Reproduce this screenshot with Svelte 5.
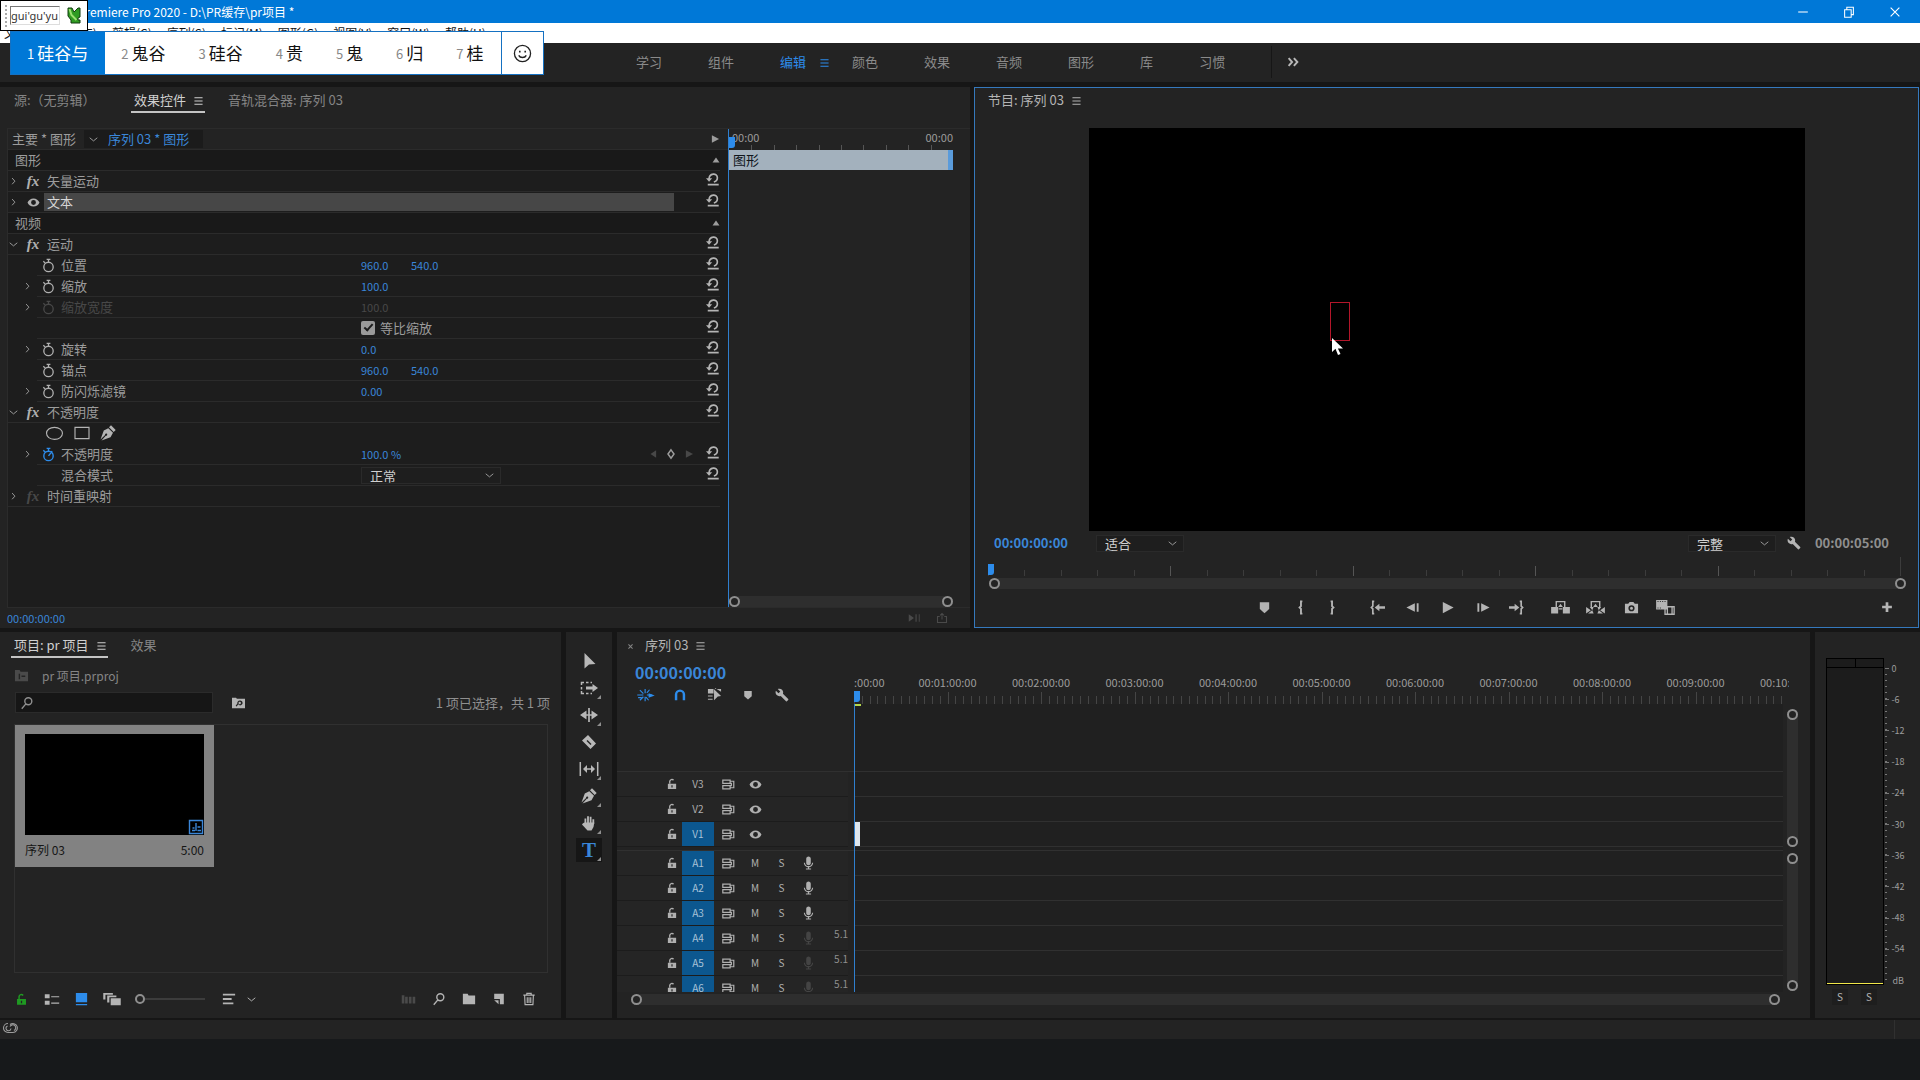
<script lang="ts">
  interface Icon {
    box?: string;
    fill?: string;
    line?: string;
    weight?: number;
  }

  interface Row {
    level: number;
    label: string;
    mark?: 'fx' | 'eye' | 'watch' | 'none';
    open?: boolean;
    arrow?: boolean;
    off?: boolean;
    on?: boolean;
    values?: string[];
    kind?: 'section' | 'uniform' | 'masks' | 'blend' | 'selected' | 'keyed';
  }

  const icons: Record<string, Icon> = {
    menu: { line: 'M3 4.5h10M3 8.5h10M3 12.5h10', weight: 1.3 },
    right: { line: 'M6 3l4 4.5L6 12', weight: 1.4 },
    down: { line: 'M2.500 5.500l5.500 4.500 5.500-4.500', weight: 1.4 },
    more: { line: 'M3 3.5l4 4.5-4 4.5M9 3.5l4 4.5-4 4.5', weight: 2.2 },
    close: { line: 'M5 5l6 6M11 5l-6 6', weight: 1.5 },
    up: { fill: 'M1 13l7-10 7 10z' },
    play: { fill: 'M3 2l11.5 6L3 14z' },
    left: { fill: 'M13 2v12L4 8z' },
    eye: { box: '0 0 24 24', fill: 'M12 4.5C7 4.5 2.7 7.6 1 12c1.7 4.4 6 7.5 11 7.5s9.300-3.100 11-7.500C21.300 7.600 17 4.500 12 4.500zM12 16.500a4.500 4.500 0 110-9 4.500 4.500 0 010 9z' },
    watch: { line: 'M8 4.500a5 5 0 100 10 5 5 0 000-10zM6 1.500h4M8 1.500v3M2.500 3.500l2 2', weight: 1.4 },
    watchOn: { line: 'M8 4.500a5 5 0 100 10 5 5 0 000-10zM6 1.500h4M8 1.500v3M2.500 3.500l2 2M8 9.500l4-5', weight: 1.5 },
    reset: { fill: 'M0 7h7l-3.500 4z', line: 'M3.500 8C3.500 1 13 0.500 13 6.500c0 3-1.500 4.200-4 5M2 14.500h12.500', weight: 1.9 },
    ellipse: { box: '0 0 20 16', line: 'M10 1.500c5 0 8.500 2.700 8.500 6.300S15 14.200 10 14.200 1.500 11.500 1.500 7.800 5 1.500 10 1.500z', weight: 1.2 },
    rect: { box: '0 0 20 16', line: 'M2 1.500h16v13H2z', weight: 1.3 },
    pen: { fill: 'M11 0.300l4.700 4.700-2 2L9 2.300zM8.300 3.200l4.700 4.600-2.500 4.500L1.500 15.500l4.300-4.800a1.100 1.100 0 10-.7-.7L.5 14.500 3.800 5.500z' },
    diamond: { line: 'M8 2.500l4 5.500-4 5.500L4 8z', weight: 2 },
    marker: { fill: 'M3 2.500h10v7l-5 4.500-5-4.500z' },
    markIn: { line: 'M10 1.500H8.500v5L7 8l1.500 1.500v5H10', weight: 2 },
    markOut: { line: 'M6 1.500h1.500v5L9 8 7.500 9.500v5H6', weight: 2 },
    goIn: { line: 'M4.500 1.500H3v5L1.500 8 3 9.500v5h1.500', fill: 'M5 8l5-4v2.700h6v2.600h-6V12z', weight: 1.8 },
    goOut: { line: 'M11.500 1.500H13v5L14.500 8 13 9.500v5h-1.500', fill: 'M11 8L6 4v2.700H0v2.600h6V12z', weight: 1.8 },
    stepBack: { fill: 'M10.500 3.500v9L1.500 8zM12.500 3.500h2v9h-2z' },
    stepOn: { fill: 'M1.500 3.500h2v9h-2zM5.500 3.500v9l9-4.500z' },
    lift: { box: '0 0 20 16', fill: 'M0 7.500h7.500v7H0zM12.500 7.500H20v7h-7.500zM10 4l2.500 3.500h-5z', line: 'M5.500 8V1.700h9V8M8 9.500h4', weight: 1.5 },
    extract: { box: '0 0 20 16', fill: 'M0 7.500l5 3.500-5 3.500zM20 7.500L15 11l5 3.500zM4 7.500h4L6.500 11 8 14.500H2L6.500 11zM16 7.500h-4l1.500 3.500-1.500 3.500h6L13.500 11zM10 4l2.500 3.500h-5z', line: 'M5.500 8V1.700h9V8', weight: 1.5 },
    camera: { fill: 'M1 4h3.500L6 2h4l1.500 2H15v10H1zM8 5.500a3.300 3.300 0 100 6.600 3.300 3.300 0 000-6.600zM8 7.200a1.600 1.600 0 110 3.200 1.600 1.600 0 010-3.200z' },
    compare: { box: '0 0 20 16', fill: 'M0 0h12v10H0zM1.500 1v1h1V1zM4 1v1h1V1zM6.500 1v1h1V1zM9 1v1h1V1zM1.500 8v1h1V8zM4 8v1h1V8z', line: 'M9.500 7.200h9.700v8H9.500zM12 7.200v8M17 7.200v8', weight: 1.4 },
    plus: { line: 'M8 1.500v13M1.500 8h13', weight: 3.6 },
    wrench: { box: '0 0 24 24', fill: 'M22.700 19l-9.100-9.100c.9-2.300.4-5-1.500-6.900-2-2-5-2.400-7.400-1.300L9 6 6 9 1.600 4.700C.4 7.100.9 10.100 2.900 12.100c1.900 1.900 4.600 2.400 6.900 1.500l9.100 9.100c.4.4 1 .4 1.400 0l2.300-2.300c.5-.4.5-1.100.1-1.400z' },
    search: { line: 'M9.500 2a4 4 0 100 8 4 4 0 000-8zM6.700 9L2 14.500', weight: 1.6 },
    bin: { fill: 'M1 2h5l1 2h8v10H1zM5 6v6h1.500V6zM8 8h4v1.500H8z' },
    findBin: { fill: 'M0 2h5l1 1.500h10V15H0zM9.500 5.500a3 3 0 00-2.900 3.700L4.500 12l1.200.9 2-2.600a3 3 0 101.800-4.800zM9.500 7a1.500 1.500 0 110 3 1.500 1.500 0 010-3z' },
    folder: { fill: 'M1 2h5.500l1 2H15v10H1z' },
    lock: { fill: 'M2.500 7.500h11v7h-11zM7.200 9.500v3h1.600v-3z', line: 'M5 7.500V4.500a2.800 2.800 0 015-1.500', weight: 1.8 },
    list: { box: '0 0 20 16', fill: 'M1 1.500h6v5H1zM1 9.500h6v5H1z', line: 'M9 4.500h10M9 12.500h10', weight: 1.4 },
    grid: { fill: 'M2 1h12v10H2zM2 12.700h12V14H2z' },
    free: { box: '0 0 20 16', fill: 'M8.500 7H20v8H8.500zM4.500 4H15v2H7v6H4.500zM0 1h11v2H2.500v5.500H0z' },
    sort: { line: 'M1 3h14M1 8h10M1 13h12', weight: 2.2 },
    auto: { box: '0 0 20 16', fill: 'M1 3h3.500v11H1zM5.500 5H9v9H5.500zM10.500 5H14v9h-3.500zM15.500 5H19v9h-3.500z' },
    newItem: { fill: 'M2.500 2h11v12H9V8H2.500zM2.500 9.500h5V14z' },
    trash: { line: 'M1.500 3.500h13M5.500 3V1.500h5V3M3 4l.5 10.500h9L13 4M6 6v6.500M8 6v6.500M10 6v6.500', weight: 1.3 },
    select: { fill: 'M3.500 0v15.500L8 11.500l6.500-.5z' },
    track: { box: '0 0 18 16', fill: 'M6 6.500h6.500V4L18 8l-5.500 4V9.500H6z', line: 'M1.500 5V2.500H4M6 2.500h2.500M10.500 2.500H12M1.500 7v2.500M1.500 11v2.500H4M6 13.500h2.500M10.500 13.500H12', weight: 1.5 },
    ripple: { box: '0 0 18 16', fill: 'M6.500 3.500v9L0 8zM11.500 3.500v9L18 8z', line: 'M9 1v14M6 8h6', weight: 1.7 },
    razor: { fill: 'M7 1l8 8.500L9.500 15 1 6.500zM5.500 7l4 4 1-1-4-4z' },
    slip: { box: '0 0 20 16', fill: 'M8 4v8L4 8zM12 4v8l4-4z', line: 'M1.300 1v14M18.700 1v14M6 8h8', weight: 1.5 },
    hand: { fill: 'M3.500 7.500h9.800l-.8 4.500-2 3.500H6.500L1 9.500l1-1.300z', line: 'M4.400 9V3.500M7 8V1.300M9.600 8V1.800M12.300 9V4.200', weight: 1.8 },
    nest: { box: '0 0 20 16', fill: 'M13 6l7 2.500-7 2.500z', line: 'M0 8h7M9 1v5M9 10v5M3 2.500l4 4M14 2l-3 3.500M3 14l4-4M13 14l-3-3.500M1 11h4M11 8h6', weight: 1.3 },
    magnet: { line: 'M3.500 14V7.500a4.500 4.500 0 019 0V14', weight: 2.800 },
    linked: { fill: 'M1 2h6v5H1zM8.500 2H15v3L8.500 1zM1 9h5v1H1zM1 12.500h5v1H1zM7.500 2.500l7.500 7-3.500.5-4 4z' },
    sync: { line: 'M1 2.500h9v4H1zM1 9.500h9v4H1zM10 4h4.500v8H10M10 6.500h1.500v3H10', weight: 1.5 },
    mic: { box: '2 1 20 21', fill: 'M12 15c2.200 0 3.500-1.500 3.500-3.500V5C15.500 3 14 1.500 12 1.500S8.500 3 8.500 5v6.500C8.500 13.500 9.800 15 12 15zM17.500 11c0 3-2.500 5.300-5.500 5.300S6.500 14 6.500 11H4.800c0 3.500 2.800 6.300 6.200 6.900V20H8v1.500h8V20h-3v-2.100c3.400-.6 6.200-3.400 6.200-6.900z' },
    seq: { line: 'M1.500 1.500h13v13h-13zM8 4v8M4 11.500h3M9.500 11.500H13M4.500 9h2M9.500 8h3', weight: 1.4 },
    cloud: { line: 'M6 3.500a4.500 4.500 0 100 9h5a4.500 4.500 0 10-3-8M5.500 6a2.500 2.500 0 103.500 2.500M8 6.500a3 3 0 114 4', weight: 1.1 },
    skip: { fill: 'M1 3l7 5-7 5zM10 3h1.500v10H10z', line: 'M15 3v10', weight: 1.2 },
    exportBox: { line: 'M5 6H2v8h12V6h-3M8 10V2M5.500 4.500L8 2l2.500 2.500', weight: 1.4 },
    minimize: { line: 'M2.500 8h11', weight: 1.2 },
    restore: { line: 'M3 5.500h7.500V14H3zM5.500 5.500V2.500H13V11h-2.500', weight: 1.2 },
    exit: { line: 'M3 3l10 10M13 3L3 13', weight: 1.3 },
    smile: { box: '0 0 20 20', fill: 'M6.300 7h1.700v2H6.300zM12 7h1.700v2H12z', line: 'M10 1.500a8.500 8.500 0 100 17 8.500 8.500 0 000-17zM6 12c1.500 3 6.500 3 8 0', weight: 1.4 },
  };

  const candidates = ['硅谷与', '鬼谷', '硅谷', '贵', '鬼', '归', '桂'];
  const menus = ['文件(F)', '编辑(E)', '剪辑(C)', '序列(S)', '标记(M)', '图形(G)', '视图(V)', '窗口(W)', '帮助(H)'];
  const workspaces = ['学习', '组件', '编辑', '颜色', '效果', '音频', '图形', '库', '习惯'];

  const rows: Row[] = [
    { level: 0, label: '图形', kind: 'section' },
    { level: 1, label: '矢量运动', mark: 'fx', arrow: true },
    { level: 1, label: '文本', mark: 'eye', arrow: true, kind: 'selected' },
    { level: 0, label: '视频', kind: 'section' },
    { level: 1, label: '运动', mark: 'fx', arrow: true, open: true },
    { level: 2, label: '位置', mark: 'watch', values: ['960.0', '540.0'] },
    { level: 2, label: '缩放', mark: 'watch', arrow: true, values: ['100.0'] },
    { level: 2, label: '缩放宽度', mark: 'watch', arrow: true, off: true, values: ['100.0'] },
    { level: 2, label: '', mark: 'none', kind: 'uniform' },
    { level: 2, label: '旋转', mark: 'watch', arrow: true, values: ['0.0'] },
    { level: 2, label: '锚点', mark: 'watch', values: ['960.0', '540.0'] },
    { level: 2, label: '防闪烁滤镜', mark: 'watch', arrow: true, values: ['0.00'] },
    { level: 1, label: '不透明度', mark: 'fx', arrow: true, open: true },
    { level: 2, label: '', mark: 'none', kind: 'masks' },
    { level: 2, label: '不透明度', mark: 'watch', arrow: true, on: true, values: ['100.0 %'], kind: 'keyed' },
    { level: 2, label: '混合模式', mark: 'none', kind: 'blend' },
    { level: 1, label: '时间重映射', mark: 'fx', arrow: true, off: true },
  ];

  const transport = [
    { name: 'marker', title: '添加标记', gap: 21 },
    { name: 'markIn', title: '标记入点', gap: 17 },
    { name: 'markOut', title: '标记出点', gap: 30 },
    { name: 'goIn', title: '转到入点', gap: 20 },
    { name: 'stepBack', title: '后退一帧', gap: 20 },
    { name: 'play', title: '播放', gap: 21 },
    { name: 'stepOn', title: '前进一帧', gap: 18 },
    { name: 'goOut', title: '转到出点', gap: 27 },
    { name: 'lift', title: '提升', gap: 16 },
    { name: 'extract', title: '提取', gap: 19 },
    { name: 'camera', title: '导出帧', gap: 17 },
    { name: 'compare', title: '比较视图', gap: 0 },
  ];

  const tools = ['select', 'track', 'ripple', 'razor', 'slip', 'pen', 'hand', 'type'];
  const minutes = [':00:00', ...Array.from({ length: 9 }, (_, i) => `00:0${i + 1}:00:00`), '00:10:00:00'];
  const videoTracks = ['V3', 'V2', 'V1'];
  const audioTracks = ['A1', 'A2', 'A3', 'A4', 'A5', 'A6'];
  const levels = ['0', '-6', '-12', '-18', '-24', '-30', '-36', '-42', '-48', '-54'];

  let workspace = $state('编辑');
  let tool = $state('type');
  let uniform = $state(true);
  let query = $state('');
  let thumbSize = $state(0);
</script>

{#snippet icon(name: string, size = 16)}
  {@const i = icons[name]}
  {@const box = i.box ?? '0 0 16 16'}
  {@const [, , w, h] = box.split(' ').map(Number)}
  <svg viewBox={box} width={Math.round((size * w) / h)} height={size} aria-hidden="true">
    {#if i.fill}<path d={i.fill} fill="currentColor" fill-rule="evenodd" />{/if}
    {#if i.line}<path d={i.line} fill="none" stroke="currentColor" stroke-width={i.weight ?? 1.5} />{/if}
  </svg>
{/snippet}

{#snippet dropdown(label: string, value: string)}
  <span class="dropdown">
    <select aria-label={label}><option>{value}</option></select>
    {@render icon('down', 11)}
  </span>
{/snippet}

{#snippet zoombar(vertical = false)}
  <div class="zoombar" class:vertical>
    <button aria-label="缩放起点"></button>
    <button aria-label="缩放终点"></button>
  </div>
{/snippet}

<div class="app">
  <header class="titlebar">
    <span class="title">Adobe Premiere Pro 2020 - D:\PR缓存\pr项目 *</span>
    <button aria-label="最小化">{@render icon('minimize', 14)}</button>
    <button aria-label="还原">{@render icon('restore', 14)}</button>
    <button aria-label="关闭">{@render icon('exit', 14)}</button>
  </header>

  <nav class="menubar">
    {#each menus as m}<button>{m}</button>{/each}
  </nav>

  <nav class="workspaces">
    {#each workspaces as w}
      <span class="workspace" class:active={w === workspace}>
        <button onclick={() => (workspace = w)}>{w}</button>
        {#if w === workspace}<i>{@render icon('menu', 13)}</i>{/if}
      </span>
    {/each}
    <button class="more" aria-label="更多工作区">{@render icon('more', 14)}</button>
  </nav>

  <main>
    <div class="upper">
      <section class="panel effects">
        <div class="tabs">
          <button class="tab wide">源:（无剪辑）</button>
          <button class="tab active">效果控件 {@render icon('menu', 13)}</button>
          <button class="tab">音轨混合器: 序列 03</button>
        </div>

        <div class="effects-body">
          <div class="props">
            <div class="crumbs">
              <button class="master">主要 * 图形</button>
              <span class="crumb-now">{@render icon('down', 11)}<button class="hot-label">序列 03 * 图形</button></span>
              <span class="fill"></span>
              {@render icon('play', 10)}
            </div>
            {#each rows as r}
              <div class="row l{r.level} {r.kind ?? ''}" class:off={r.off}>
                {#if r.kind === 'section'}
                  <span>{r.label}</span>
                  <span class="fill"></span>
                  {@render icon('up', 8)}
                {:else}
                  <span class="arrow">{#if r.arrow}{@render icon(r.open ? 'down' : 'right', 11)}{/if}</span>
                  <div class="inner">
                    {#if r.kind === 'masks'}
                      <div class="shapes">
                        <button aria-label="椭圆蒙版">{@render icon('ellipse', 15)}</button>
                        <button aria-label="矩形蒙版">{@render icon('rect', 14)}</button>
                        <button aria-label="钢笔蒙版">{@render icon('pen', 16)}</button>
                      </div>
                    {:else}
                      <span class="mark" class:on={r.on}>
                        {#if r.mark === 'fx'}<em>fx</em>
                        {:else if r.mark === 'eye'}{@render icon('eye', 13)}
                        {:else if r.mark === 'watch'}{@render icon(r.on ? 'watchOn' : 'watch', 15)}{/if}
                      </span>
                      <span class="name">{r.label}</span>
                      {#if r.values}
                        {#each r.values as v}<button class="hot">{v}</button>{/each}
                      {:else if r.kind === 'uniform'}
                        <label class="check"><input type="checkbox" bind:checked={uniform} />等比缩放</label>
                      {:else if r.kind === 'blend'}
                        {@render dropdown('混合模式', '正常')}
                      {/if}
                      <span class="fill"></span>
                      {#if r.kind === 'keyed'}
                        <span class="keys">
                          <i>{@render icon('left', 10)}</i>{@render icon('diamond', 12)}<i>{@render icon('play', 10)}</i>
                        </span>
                      {/if}
                      {#if r.label !== '时间重映射'}
                        <button class="reset" aria-label="重置">{@render icon('reset', 14)}</button>
                      {/if}
                    {/if}
                  </div>
                {/if}
              </div>
            {/each}
          </div>

          <div class="keyframes">
            <div class="mini-ruler">
              <div class="mini-labels"><span>00:00</span><span>00:00</span></div>
              <div class="mini-ticks">
                {#each { length: 10 } as _}<i></i>{/each}
              </div>
              <b class="head"></b>
            </div>
            <div class="mini-clip">图形</div>
            <div class="fill"></div>
            {@render zoombar()}
          </div>
        </div>

        <footer class="effects-foot">
          <button class="hot">00:00:00:00</button>
          <span class="fill"></span>
          {@render icon('skip', 12)}
          {@render icon('exportBox', 12)}
        </footer>
      </section>

      <section class="panel program">
        <div class="tabs">
          <button class="tab bare">节目: 序列 03 {@render icon('menu', 13)}</button>
        </div>
        <div class="stage">
          <div class="video">
            <span class="text-box"></span>
            <svg class="cursor" viewBox="0 0 11 17" width="11" height="17"><path d="M0 0v14l3.500-3.200L6 17l2.500-1-2.600-5.500H11z" fill="#fff" /></svg>
          </div>
        </div>
        <div class="monitor-bar">
          <button class="timecode">00:00:00:00</button>
          {@render dropdown('选择缩放级别', '适合')}
          <span class="fill"></span>
          {@render dropdown('选择回放分辨率', '完整')}
          <button class="settings" aria-label="设置">{@render icon('wrench', 14)}</button>
          <span class="duration">00:00:05:00</span>
        </div>
        <div class="monitor-ruler">
          {#each { length: 25 } as _, n}<i class:major={n && n % 5 === 0}></i>{/each}
          <b class="head"></b>
        </div>
        <div class="monitor-zoom">{@render zoombar()}</div>
        <div class="transport">
          {#each transport as t}
            <button aria-label={t.title} style:margin-right="{t.gap}px">{@render icon(t.name, 15)}</button>
          {/each}
          <button class="add" aria-label="按钮编辑器">{@render icon('plus', 12)}</button>
        </div>
      </section>
    </div>

    <div class="lower">
      <section class="panel project">
        <div class="tabs">
          <button class="tab active">项目: pr 项目 {@render icon('menu', 13)}</button>
          <button class="tab">效果</button>
        </div>
        <div class="path"><i>{@render icon('bin', 15)}</i>pr 项目.prproj</div>
        <div class="find">
          <label class="search">
            {@render icon('search', 14)}
            <input type="text" aria-label="搜索" bind:value={query} />
          </label>
          <button aria-label="从查询创建新的搜索素材箱">{@render icon('findBin', 13)}</button>
          <span class="fill"></span>
          <span>1 项已选择，共 1 项</span>
        </div>
        <div class="items">
          <article class="item">
            <div class="thumb"><span class="badge">{@render icon('seq', 16)}</span></div>
            <div class="caption"><span>序列 03</span><span>5:00</span></div>
          </article>
        </div>
        <footer class="project-foot">
          <button class="green" aria-label="项目可写">{@render icon('lock', 13)}</button>
          <button aria-label="列表视图">{@render icon('list', 13)}</button>
          <button class="blue" aria-label="图标视图">{@render icon('grid', 15)}</button>
          <button aria-label="自由变换视图">{@render icon('free', 14)}</button>
          <input type="range" aria-label="缩略图大小" min="0" max="100" bind:value={thumbSize} />
          <button aria-label="排序图标">{@render icon('sort', 14)}</button>
          <button class="sort-more" aria-label="排序选项">{@render icon('down', 11)}</button>
          <span class="fill"></span>
          <button class="dim" aria-label="自动匹配序列">{@render icon('auto', 12)}</button>
          <button aria-label="查找">{@render icon('search', 14)}</button>
          <button aria-label="新建素材箱">{@render icon('folder', 14)}</button>
          <button aria-label="新建项">{@render icon('newItem', 14)}</button>
          <button aria-label="清除">{@render icon('trash', 14)}</button>
        </footer>
      </section>

      <section class="panel tools">
        {#each tools as t}
          <button class:active={tool === t} class:nested={t !== 'select' && t !== 'razor'} aria-label={t} onclick={() => (tool = t)}>
            {#if t === 'type'}<span class="type">T</span>{:else}{@render icon(t, 16)}{/if}
          </button>
        {/each}
      </section>

      <section class="panel timeline">
        <div class="tabs">
          <button class="close" aria-label="关闭序列">{@render icon('close', 11)}</button>
          <button class="tab bare">序列 03 {@render icon('menu', 13)}</button>
        </div>
        <div class="timeline-body">
          <div class="heads">
            <button class="timecode big">00:00:00:00</button>
            <div class="toggles">
              <button class="blue" aria-label="嵌套或单个剪辑">{@render icon('nest', 14)}</button>
              <button class="blue" aria-label="对齐">{@render icon('magnet', 14)}</button>
              <button aria-label="链接选择项">{@render icon('linked', 15)}</button>
              <button aria-label="添加标记">{@render icon('marker', 12)}</button>
              <button aria-label="时间轴显示设置">{@render icon('wrench', 14)}</button>
            </div>
            <div class="fill"></div>
            <div class="tracks">
              {#each videoTracks as t}
                <div class="track">
                  <button class="lock" aria-label="锁定 {t}">{@render icon('lock', 12)}</button>
                  <button class="target" class:lit={t === 'V1'}>{t}</button>
                  <button aria-label="同步锁定 {t}">{@render icon('sync', 13)}</button>
                  <button aria-label="切换 {t} 输出">{@render icon('eye', 13)}</button>
                </div>
              {/each}
              <div class="split"></div>
              {#each audioTracks as t, n}
                <div class="track">
                  <button class="lock" aria-label="锁定 {t}">{@render icon('lock', 12)}</button>
                  <button class="target lit">{t}</button>
                  <button aria-label="同步锁定 {t}">{@render icon('sync', 13)}</button>
                  <button>M</button>
                  <button>S</button>
                  <button class:dim={n > 2} aria-label="画外音 {t}">{@render icon('mic', 14)}</button>
                  {#if n > 2}<span class="channels">5.1</span>{/if}
                </div>
              {/each}
            </div>
          </div>

          <div class="lanes">
            <div class="ruler">
              {#each minutes as m, n}
                <div class="minute">
                  <span class="minute-label" class:first={n === 0}>{m}</span>
                  {#if n < 10}
                    <div class="ticks">{#each { length: 12 } as _}<i></i>{/each}</div>
                  {/if}
                </div>
              {/each}
              <b class="head"></b>
            </div>
            <div class="area">
              <span class="render"></span>
              <div class="fill"></div>
              <div class="tracks">
                <div class="lane"></div>
                <div class="lane"></div>
                <div class="lane"><span class="clip"></span></div>
                <div class="split"></div>
                {#each audioTracks as _}<div class="lane"></div>{/each}
              </div>
            </div>
          </div>

          <div class="vscroll">
            {@render zoombar(true)}
            {@render zoombar(true)}
          </div>
        </div>
        <div class="timeline-zoom">{@render zoombar()}</div>
      </section>

      <section class="panel meters">
        <div class="meter-main">
          <div class="meter">
            <div class="peaks"><i></i><i></i></div>
            <div class="bars"></div>
          </div>
          <div class="scale">
            {#each levels as l}
              <div class="step">
                <div class="db"><i></i><span>{l}</span></div>
                {#each { length: 5 } as _}<i></i>{/each}
              </div>
            {/each}
            <span class="unit">dB</span>
          </div>
        </div>
        <div class="solo"><button>S</button><button>S</button></div>
      </section>
    </div>
  </main>

  <div class="status">{@render icon('cloud', 16)}<i></i></div>
  <div class="taskbar"></div>

  <div class="ime-input">
    <i></i>
    <input type="text" aria-label="拼音" value="gui'gu'yu" />
    <svg viewBox="0 0 14 17" width="14" height="17"><path d="M1 1h4l2 4 4-4h2v9l-2 1v2h2v3H4v-3L1 9z" fill="#2f9a22" stroke="#123d10" /><path d="M2.500 2l2 6 5 5" fill="none" stroke="#9be070" stroke-width="2" /></svg>
  </div>
  <div class="ime-list">
    {#each candidates as c, n}
      <button class="candidate" class:picked={n === 0}><small>{n + 1}</small>{c}</button>
    {/each}
    <button class="emoji" aria-label="表情">{@render icon('smile', 19)}</button>
  </div>
</div>

<style>
  :global(body) {
    background: #161616;
  }

  .app {
    position: relative;
    display: flex;
    flex-direction: column;
    min-height: 100vh;
    font: 13px/18px 'Noto Sans CJK SC', sans-serif;
    color: #9c9c9c;
    background: #161616;
    overflow: hidden;
  }

  button,
  input,
  select {
    margin: 0;
    padding: 0;
    border: 0;
    background: none;
    font: inherit;
    color: inherit;
    outline: none;
  }

  button {
    display: flex;
    align-items: center;
    justify-content: center;
    white-space: nowrap;
  }

  svg {
    display: block;
    flex-shrink: 0;
  }

  .fill {
    flex: 1;
  }

  .blue {
    color: #2d8ceb;
  }

  .green {
    color: #1f9a22;
  }

  .dim {
    color: #4a4a4a;
  }

  /* ---- window chrome ---- */

  .titlebar {
    display: flex;
    align-items: center;
    height: 23px;
    padding-right: 2px;
    background: #0078d7;
    color: #fff;
    font-size: 12px;
  }

  .title {
    flex: 1;
    padding-left: 39px;
  }

  .titlebar button {
    width: 46px;
    height: 20px;
  }

  .menubar {
    display: flex;
    gap: 15px;
    height: 20px;
    padding-left: 4px;
    background: #fff;
    color: #111;
    font-size: 12px;
  }

  .workspaces {
    display: flex;
    align-items: center;
    gap: 46px;
    height: 37px;
    padding: 0 0 2px 636px;
    background: #232323;
    color: #8a8a8a;
  }

  .workspace {
    position: relative;
  }

  .workspace.active {
    color: #2d8ceb;
  }

  .workspace i {
    position: absolute;
    left: 38px;
    top: 3px;
  }

  .more {
    height: 32px;
    padding-left: 14px;
    border-left: 1px solid #161616;
    color: #b8b8b8;
  }

  /* ---- layout ---- */

  main {
    flex: 1;
    display: grid;
    grid-template-rows: 541fr 386fr;
    gap: 4px;
    padding: 5px 0 2px;
  }

  .upper {
    display: grid;
    grid-template-columns: 970fr 946fr;
    gap: 4px;
  }

  .lower {
    display: grid;
    grid-template-columns: 561fr 46px 1193fr 105px;
    gap: 5px;
  }

  .panel {
    display: flex;
    flex-direction: column;
    min-width: 0;
    background: #232323;
  }

  .tabs {
    display: flex;
    gap: 20px;
    padding: 2px 12px 0 11px;
    color: #858585;
  }

  .tab {
    gap: 6px;
    height: 24px;
    padding-left: 3px;
    border-bottom: 2px solid transparent;
  }

  .tab.wide {
    justify-content: flex-start;
    min-width: 100px;
  }

  .tab.active {
    color: #d0d0d0;
    border-color: #c4c4c4;
  }

  .tab.bare {
    color: #b4b4b4;
  }

  .head {
    width: 6px;
    height: 11px;
    background: #2d8ceb;
    border-radius: 0 0 3px 0;
  }

  .hot {
    font-size: 11px;
    line-height: 16px;
    color: #3a86d8;
  }

  .timecode {
    color: #3a86d8;
    font-size: 13px;
    font-weight: 700;
  }

  .dropdown {
    display: inline-grid;
    width: 88px;
    align-items: center;
    border: 1px solid #2a2a2a;
    background: #1e1e1e;
    box-sizing: border-box;
  }

  .dropdown select {
    grid-area: 1 / 1;
    width: 100%;
    height: 15px;
    padding-left: 8px;
    line-height: 15px;
    appearance: none;
    color: #d0d0d0;
  }

  .dropdown :global(svg) {
    grid-area: 1 / 1;
    justify-self: end;
    margin-right: 5px;
    pointer-events: none;
  }

  .zoombar {
    display: flex;
    justify-content: space-between;
    align-items: center;
    width: 100%;
    height: 11px;
    background: #2e2e2e;
    border-radius: 5px;
  }

  .zoombar.vertical {
    flex-direction: column;
    width: 11px;
    height: auto;
    flex: 1;
  }

  .zoombar button {
    width: 11px;
    height: 11px;
    border: 2px solid #8f8f8f;
    border-radius: 50%;
    background: #232323;
    box-sizing: border-box;
  }

  /* ---- effect controls ---- */

  .effects .tabs {
    padding-bottom: 15px;
  }

  .effects-body {
    flex: 1;
    display: flex;
    margin-left: 7px;
    padding-right: 17px;
    border: solid #2b2b2b;
    border-width: 1px 0 1px 1px;
  }

  .props {
    flex: 1;
    padding-right: 8px;
    background: #1d1d1d;
  }

  .crumbs {
    display: flex;
    align-items: center;
    height: 20px;
    margin-right: -8px;
    padding: 0 8px 0 4px;
    background: #232323;
    border-bottom: 1px solid #2b2b2b;
  }

  .crumb-now {
    display: flex;
    align-items: center;
    gap: 9px;
    margin-left: 8px;
    padding: 0 14px 0 4px;
    background: #1b1b1b;
  }

  .hot-label {
    color: #3a86d8;
  }

  .row {
    display: flex;
    align-items: center;
    height: 21px;
    box-sizing: border-box;
    border-bottom: 1px solid #2b2b2b;
  }

  .row.section {
    padding-left: 7px;
    background: #191919;
  }

  .row.l2 {
    padding-left: 14px;
    border-bottom: 0;
  }

  .arrow {
    display: flex;
    justify-content: center;
    width: 10px;
  }

  .inner {
    flex: 1;
    display: flex;
    align-items: center;
    height: 20px;
    margin-left: 4px;
  }

  .l2 .inner {
    margin-left: 5px;
    border-bottom: 1px solid #2b2b2b;
  }

  .masks .inner {
    border-bottom-color: transparent;
  }

  .mark {
    display: flex;
    justify-content: center;
    width: 22px;
    color: #b0b0b0;
  }

  .mark.on {
    color: #2d8ceb;
  }

  em {
    font: italic 700 15px/16px 'Liberation Serif', serif;
  }

  .name {
    box-sizing: border-box;
    width: 302px;
    padding-left: 2px;
  }

  .l1 .name {
    padding-left: 3px;
  }

  .selected .name {
    flex: 1;
    height: 18px;
    margin-right: 32px;
    background: #474747;
    color: #d6d6d6;
  }

  .selected .fill {
    display: none;
  }

  .off .mark,
  .l2.off .name,
  .off .hot {
    color: #484848;
  }

  .row .hot {
    min-width: 50px;
    justify-content: flex-start;
  }

  .row .dropdown {
    width: 140px;
  }

  .check {
    display: flex;
    align-items: center;
    gap: 5px;
  }

  .check input {
    display: grid;
    place-items: center;
    width: 14px;
    height: 14px;
    appearance: none;
    border-radius: 2px;
    background: #9a9a9a;
  }

  .check input:checked::after {
    content: '';
    width: 3px;
    height: 7px;
    margin-bottom: 3px;
    border: solid #1d1d1d;
    border-width: 0 2px 2px 0;
    transform: rotate(42deg);
  }

  .shapes {
    display: flex;
    gap: 9px;
    padding-left: 8px;
    color: #b4b4b4;
  }

  .keys {
    display: flex;
    align-items: center;
    gap: 7px;
    margin-right: 12px;
  }

  .keys i {
    color: #484848;
  }

  .reset {
    color: #b4b4b4;
    padding-bottom: 5px;
  }

  .keyframes {
    display: flex;
    flex-direction: column;
    width: 224px;
    border-left: 1px solid #2f7fcf;
  }

  .mini-ruler {
    position: relative;
    height: 21px;
  }

  .mini-labels {
    display: flex;
    justify-content: space-between;
    height: 16px;
    padding-left: 3px;
    font-size: 11px;
    line-height: 16px;
  }

  .mini-ticks {
    display: flex;
    height: 5px;
  }

  .mini-ticks i {
    flex: 1;
    border-left: 1px solid #555;
  }

  .mini-ticks i:first-child {
    border-color: transparent;
  }

  .mini-ruler .head {
    position: absolute;
    left: 0;
    top: 8px;
  }

  .mini-clip {
    height: 20px;
    padding-left: 4px;
    line-height: 19px;
    color: #10161c;
    background: #a3b1bd;
    border-right: 5px solid #5a9bdb;
  }

  .effects-foot {
    display: flex;
    align-items: center;
    gap: 16px;
    height: 20px;
    padding: 0 22px 0 7px;
    color: #4a4a4a;
  }

  /* ---- program monitor ---- */

  .program {
    margin-right: 1px;
    border: 1px solid #3579bd;
  }

  .program .tabs {
    padding-top: 1px;
    padding-left: 10px;
  }

  .stage {
    flex: 1;
    display: flex;
    justify-content: center;
    padding-top: 15px;
  }

  .video {
    position: relative;
    aspect-ratio: 716 / 403;
    background: #000;
  }

  .text-box {
    position: absolute;
    left: 34%;
    top: 43%;
    width: 18px;
    height: 37px;
    margin: 1px 0 0 -2px;
    border: 1px solid #b3162a;
  }

  .cursor {
    position: absolute;
    left: 34%;
    top: 52%;
  }

  .monitor-bar {
    display: flex;
    align-items: center;
    height: 24px;
    padding: 0 29px 2px 19px;
  }

  .monitor-bar .timecode {
    margin-right: 28px;
  }

  .settings {
    padding: 0 14px 0 11px;
    color: #b4b4b4;
  }

  .duration {
    font-size: 13px;
    font-weight: 700;
    color: #8f8f8f;
  }

  .monitor-ruler {
    position: relative;
    display: flex;
    align-items: flex-end;
    height: 19px;
    margin: 0 17px 0 13px;
    border-right: 1px solid #3c3c3c;
  }

  .monitor-ruler i {
    flex: 1;
    height: 6px;
    border-left: 1px solid #3c3c3c;
  }

  .monitor-ruler i.major {
    height: 10px;
    border-color: #555;
  }

  .monitor-ruler .head {
    position: absolute;
    left: 0;
    bottom: 1px;
  }

  .monitor-zoom {
    padding: 2px 12px 0 14px;
  }

  .transport {
    position: relative;
    display: flex;
    align-items: center;
    justify-content: center;
    height: 36px;
    padding: 0 0 2px 38px;
    color: #b4b4b4;
  }

  .transport .add {
    position: absolute;
    right: 25px;
  }

  /* ---- project ---- */

  .path {
    display: flex;
    align-items: center;
    gap: 13px;
    height: 35px;
    padding-left: 14px;
    font-size: 12px;
    color: #858585;
  }

  .path i {
    color: #4a4a4a;
  }

  .find {
    display: flex;
    align-items: center;
    gap: 19px;
    height: 19px;
    padding: 0 11px 12px 15px;
    color: #8f8f8f;
  }

  .find button {
    color: #b4b4b4;
  }

  .search {
    display: flex;
    align-items: center;
    gap: 4px;
    width: 192px;
    height: 19px;
    padding-left: 4px;
    border: 1px solid #2b2b2b;
    background: #161616;
  }

  .search input {
    flex: 1;
    min-width: 0;
  }

  .items {
    flex: 1;
    margin: 0 13px 0 14px;
    border: 1px solid #303030;
  }

  .item {
    width: 179px;
    padding: 9px 10px 8px;
    background: #828282;
    color: #161616;
    font-size: 12px;
  }

  .thumb {
    display: flex;
    align-items: flex-end;
    justify-content: flex-end;
    aspect-ratio: 179 / 101;
    background: #000;
  }

  .badge {
    color: #3a86d8;
  }

  .caption {
    display: flex;
    justify-content: space-between;
    padding-top: 6px;
  }

  .project-foot {
    display: flex;
    align-items: center;
    gap: 14px;
    height: 38px;
    padding: 7px 25px 0 15px;
    color: #b4b4b4;
  }

  .project-foot .green {
    margin-right: 2px;
  }

  .project-foot input {
    width: 70px;
    height: 11px;
    margin-right: 3px;
    appearance: none;
    background: linear-gradient(#3c3c3c, #3c3c3c) center / 100% 2px no-repeat;
  }

  .project-foot input::-webkit-slider-thumb {
    appearance: none;
    width: 10px;
    height: 10px;
    border: 2px solid #8f8f8f;
    border-radius: 50%;
    background: #232323;
  }

  .project-foot .sort-more {
    margin-left: -4px;
  }

  .project-foot .fill ~ button {
    margin-left: 2px;
  }

  /* ---- tools ---- */

  .tools {
    align-items: center;
    gap: 3px;
    padding-top: 17px;
    color: #b8b8b8;
  }

  .tools button {
    position: relative;
    width: 26px;
    height: 24px;
  }

  .tools .active {
    background: #161616;
    color: #3a86d8;
  }

  .nested::after {
    content: '';
    position: absolute;
    right: 1px;
    bottom: 1px;
    border: 2px solid;
    border-color: transparent #8f8f8f #8f8f8f transparent;
  }

  .type {
    font: 700 21px/24px 'Liberation Serif', serif;
  }

  /* ---- timeline ---- */

  .timeline .tabs {
    gap: 6px;
    padding-left: 8px;
  }

  .timeline-body {
    flex: 1;
    display: flex;
  }

  .heads {
    display: flex;
    flex-direction: column;
    width: 237px;
  }

  .timecode.big {
    align-self: flex-start;
    height: 27px;
    padding: 0 0 2px 18px;
    font-size: 16px;
    box-sizing: content-box;
  }

  .toggles {
    display: grid;
    grid-template-columns: repeat(5, 34px);
    padding-left: 12px;
    color: #b4b4b4;
  }

  .tracks {
    height: 221px;
    overflow: hidden;
    border-top: 1px solid #303030;
    box-sizing: border-box;
  }

  .track {
    display: grid;
    grid-template-columns: 65px 32px 28px 26px 27px 27px 26px;
    height: 24px;
    width: 231px;
    background: #252525;
    border-bottom: 1px solid #1c1c1c;
    font-size: 10px;
    line-height: 10px;
    color: #b0b0b0;
  }

  .track .lock {
    justify-content: flex-end;
    padding-right: 4px;
  }

  .target.lit {
    background: #0c578f;
    color: #a9c3d8;
  }

  .track .dim {
    color: #444;
  }

  .channels {
    text-align: right;
    line-height: 15px;
    color: #8f8f8f;
  }

  .split {
    height: 3px;
    border-bottom: 1px solid #303030;
  }

  .lanes {
    flex: 1;
    display: flex;
    flex-direction: column;
    min-width: 0;
  }

  .ruler {
    position: relative;
    display: flex;
    height: 46px;
    margin-right: -4px;
    overflow: hidden;
  }

  .minute {
    display: flex;
    flex: 0 0 10%;
    flex-direction: column;
    justify-content: space-between;
  }

  .minute-label {
    display: flex;
    justify-content: center;
    width: 0;
    padding-top: 15px;
    font-size: 11px;
    white-space: nowrap;
  }

  .minute-label.first {
    justify-content: flex-start;
  }

  .ticks {
    display: flex;
    align-items: flex-end;
  }

  .ticks i {
    flex: 1;
    height: 8px;
    border-left: 1px solid #454545;
  }

  .ticks i:first-child {
    height: 12px;
  }

  .ruler .head {
    position: absolute;
    left: 0;
    bottom: 2px;
  }

  .area {
    flex: 1;
    display: flex;
    flex-direction: column;
    margin-right: 2px;
    border-left: 1px solid #2f7fcf;
    background: #202020;
  }

  .render {
    width: 6px;
    height: 2px;
    background: #b6d94c;
  }

  .lane {
    height: 24px;
    border-bottom: 1px solid #303030;
  }

  .clip {
    display: block;
    width: 5px;
    height: 24px;
    background: #dfe7ee;
  }

  .vscroll {
    display: flex;
    flex-direction: column;
    gap: 6px;
    padding: 51px 12px 1px 2px;
  }

  .timeline-zoom {
    padding: 2px 30px 13px 14px;
  }

  /* ---- audio meters ---- */

  .meters {
    padding: 26px 0 0 11px;
    font-size: 9px;
  }

  .meter-main {
    flex: 1;
    display: flex;
  }

  .meter {
    display: flex;
    flex-direction: column;
    width: 57px;
    border: 1px solid #000;
    background: #1c1c1c;
  }

  .peaks {
    display: flex;
    height: 8px;
    border-bottom: 1px solid #000;
  }

  .peaks i {
    flex: 1;
  }

  .peaks i + i {
    border-left: 1px solid #000;
  }

  .bars {
    flex: 1;
    border-bottom: 1px solid #f0e64a;
  }

  .scale {
    display: flex;
    flex-direction: column;
    width: 36px;
    padding: 10px 0 5px;
  }

  .step {
    flex: 1;
    display: flex;
    flex-direction: column;
    justify-content: space-between;
  }

  .step i {
    width: 2px;
    height: 1px;
    margin-left: 1px;
    background: #777;
  }

  .step .db {
    display: flex;
    align-items: center;
    gap: 2px;
    height: 1px;
  }

  .step .db i {
    width: 4px;
  }

  .unit {
    height: 0;
    padding-left: 8px;
    line-height: 1px;
  }

  .solo {
    display: flex;
    gap: 13px;
    height: 33px;
    padding: 4px 0 0 6px;
    box-sizing: border-box;
    font-size: 10px;
  }

  .solo button {
    width: 16px;
    height: 16px;
    background: #1e1e1e;
    color: #b4b4b4;
  }

  /* ---- bottom ---- */

  .status {
    display: flex;
    justify-content: space-between;
    height: 19px;
    padding: 0 25px 0 2px;
    background: #232323;
  }

  .status i {
    border-left: 1px solid #303030;
  }

  .taskbar {
    height: 41px;
    background: #17191b;
  }

  /* ---- input method ---- */

  .ime-input {
    position: absolute;
    left: 0;
    top: 0;
    display: flex;
    align-items: center;
    gap: 7px;
    width: 82px;
    height: 29px;
    padding-left: 4px;
    border: 1px solid #000;
    background: #fff;
  }

  .ime-input i {
    width: 1px;
    height: 22px;
    margin-right: -5px;
    border-left: 2px dotted #aaa;
  }

  .ime-input input {
    width: 48px;
    height: 17px;
    border: 1px solid #777;
    border-color: #777 #ddd #ddd #777;
    color: #333;
    font: 11px/16px 'Noto Sans', sans-serif;
  }

  .ime-list {
    position: absolute;
    left: 10px;
    top: 31px;
    display: flex;
    height: 42px;
    border: 1px solid #1571c2;
    background: #fff;
    color: #111;
    font-size: 17px;
  }

  .candidate {
    gap: 3px;
    padding: 0 17px 0 16px;
  }

  .candidate small {
    padding-top: 1px;
    font-size: 13px;
    color: #888;
  }

  .candidate.picked,
  .picked small {
    background: #0078d7;
    color: #fff;
  }

  .emoji {
    width: 42px;
    border-left: 1px solid #1571c2;
    color: #222;
  }
</style>
